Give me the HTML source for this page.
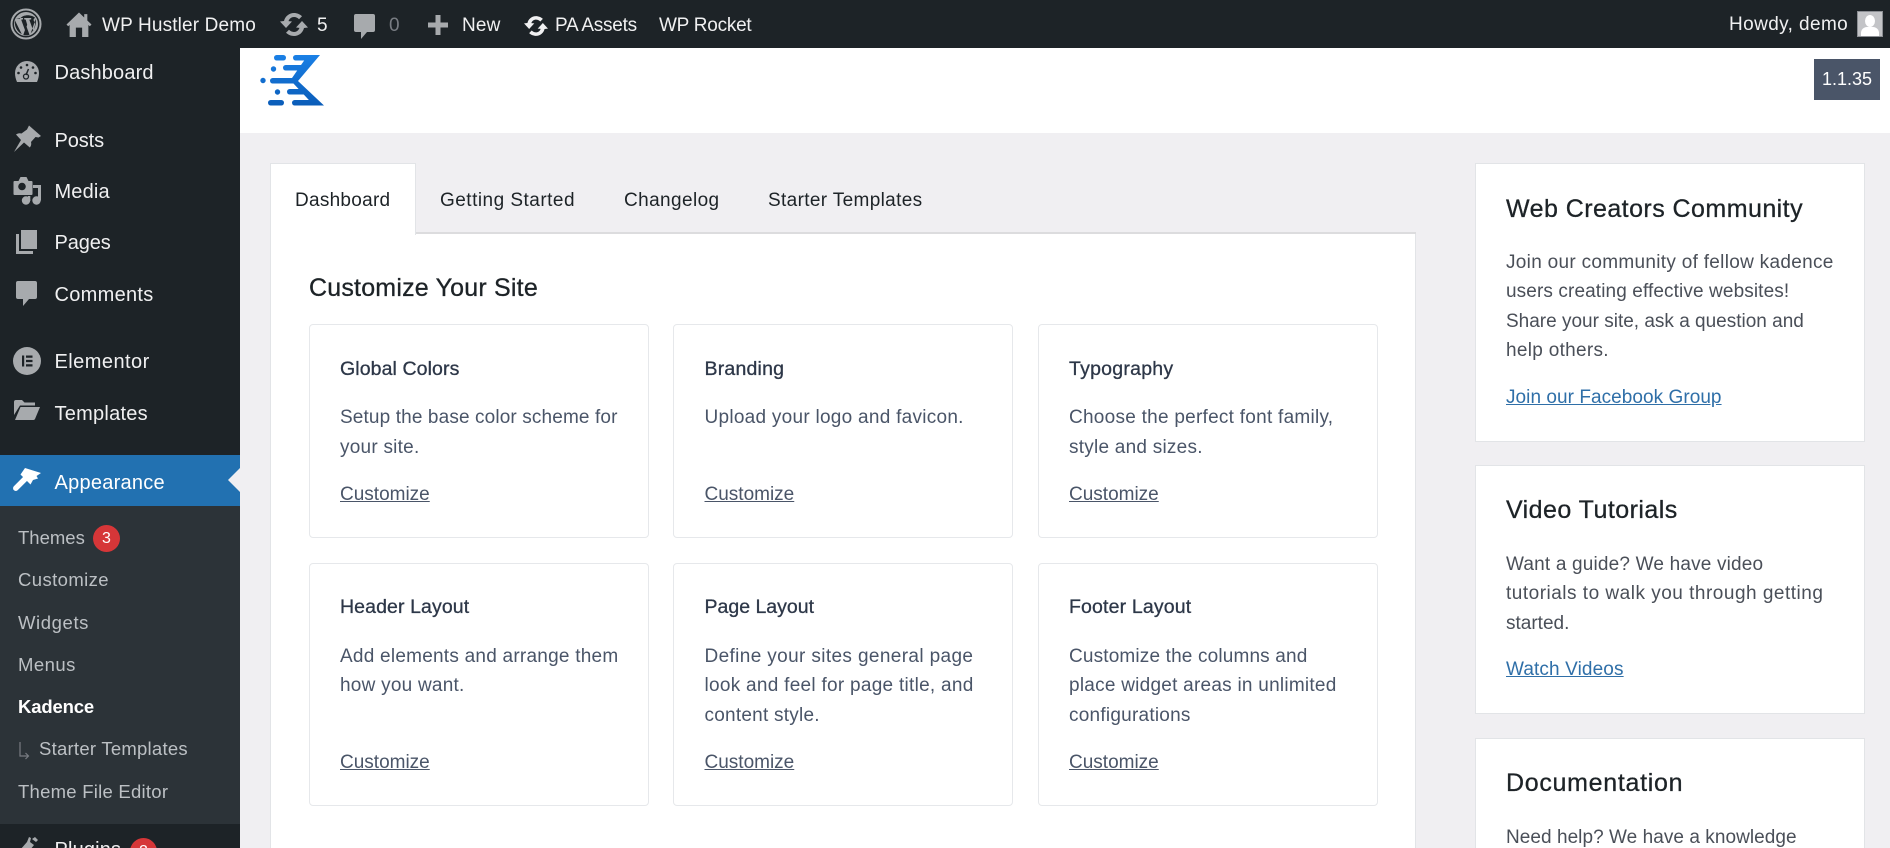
<!DOCTYPE html>
<html lang="en"><head><meta charset="utf-8"><title>Kadence Dashboard</title>
<style>
*{box-sizing:border-box}
html,body{margin:0;padding:0;width:1890px;height:848px;overflow:hidden;background:#f0eff2;font-family:"Liberation Sans",sans-serif}
#wrap{position:relative;width:1890px;height:848px;overflow:hidden;background:#f0eff2}
.a{position:absolute}
.t{position:absolute;white-space:nowrap;height:30px;line-height:30px}
svg{position:absolute;display:block}
#bar{left:0;top:0;width:1890px;height:48px;background:#1d2327}
#side{left:0;top:48px;width:240px;height:800px;background:#1d2327}
.bt{font-size:19px;color:#f0f0f1;letter-spacing:.15px}
.m{font-size:20px;color:#f0f0f1;letter-spacing:.15px}
.s{font-size:18.5px;color:#bcc0c4;letter-spacing:.25px}
.tab{font-size:19px;color:#1d2327;letter-spacing:.38px}
.box{position:absolute;background:#fff;border:1px solid #e6e8eb;border-radius:4px}
.ct{font-size:19.5px;color:#2d3748;-webkit-text-stroke:.3px #2d3748;letter-spacing:.1px}
.cd{font-size:19px;color:#4a5568;letter-spacing:.24px}
.cl{font-size:19px;color:#4a5568;text-decoration:underline;letter-spacing:0}
.rc{position:absolute;background:#fff;border:1px solid #e2e4e7;left:1475px;width:390px}
.rt{font-size:25px;color:#1d2327;-webkit-text-stroke:.3px #1d2327;letter-spacing:.45px}
.rd{font-size:19px;color:#4a4f58}
.rl{font-size:19px;color:#2f6fa8;text-decoration:underline;letter-spacing:.05px}
</style></head><body><div id="wrap">

<div class="a" id="bar"></div>
<div class="a" id="side"></div>

<!-- admin bar icons -->
<svg style="left:10px;top:8px" width="32" height="32" viewBox="0 0 32 32"><circle cx="16" cy="16" r="14.5" fill="none" stroke="#a7aaad" stroke-width="2"/><circle cx="16" cy="16" r="12" fill="#a7aaad"/><path d="M6 10h7v1.400l-1.800.3 4 11 2-6-1.500-5.100-1.500-.2V10h7v1.400l-1.900.3 4 11 1.500-5c.7-2.300-.2-3.700-1-5-.5-1 0-2.600 1.500-2.700-3-3-11-4.500-15.500.7zM5 12.500c-1 4.500 1.500 11 6.800 13.600zM16.300 18l-3 9c2 .6 4.200.5 6.200-.2zM25.700 11c.8 4-.5 10-5 14.400z" fill="#1d2327"/></svg>
<svg style="left:66px;top:12px" width="26" height="25" viewBox="0 0 24 24"><path d="M12 0.500 0 12l1.600 1.700L3 12.500V24h18V12.500l1.400 1.200L24 12l-4-3.800V2h-3v3.300zM9 15h6v9H9z" fill="#a7aaad" fill-rule="evenodd"/></svg>
<svg style="left:280px;top:12px" width="28" height="25" viewBox="0 0 28 25"><path d="M14 1C9 1 5 4.500 4 9L0 9.500 6 16l6-6.500-3.500-.4C9.500 6.500 11.500 5 14 5c2 0 3.700.8 5 2.200l3-3C20 2.300 17 1 14 1zM22 9l-6 6.500 3.500.4C18.500 18.500 16.500 20 14 20c-2 0-3.700-.8-5-2.200l-3 3C8 22.700 11 24 14 24c5 0 9-3.500 10-8l4-.5z" fill="#a7aaad"/></svg>
<svg style="left:354px;top:14px" width="21" height="25" viewBox="0 0 21 25"><path d="M2 0h17a2 2 0 0 1 2 2v14a2 2 0 0 1-2 2h-6l-6 7v-7H2a2 2 0 0 1-2-2V2a2 2 0 0 1 2-2z" fill="#a7aaad"/></svg>
<svg style="left:428px;top:15px" width="20" height="20" viewBox="0 0 20 20"><path d="M7.500 0h5v7.500H20v5h-7.500V20h-5v-7.500H0v-5h7.500z" fill="#a7aaad"/></svg>
<svg style="left:524px;top:14px" width="24" height="24" viewBox="0 0 28 25"><path d="M14 1C9 1 5 4.500 4 9L0 9.500 6 16l6-6.500-3.500-.4C9.500 6.500 11.500 5 14 5c2 0 3.700.8 5 2.200l3-3C20 2.300 17 1 14 1zM22 9l-6 6.500 3.500.4C18.500 18.500 16.500 20 14 20c-2 0-3.700-.8-5-2.200l-3 3C8 22.700 11 24 14 24c5 0 9-3.500 10-8l4-.5z" fill="#f0f0f1"/></svg>

<div class="t bt" style="left:102px;top:11px">WP Hustler Demo</div>
<div class="t bt" style="left:317px;top:11px">5</div>
<div class="t bt" style="left:389px;top:11px;color:#787c82">0</div>
<div class="t bt" style="left:462px;top:11px">New</div>
<div class="t bt" style="left:555px;top:11px;letter-spacing:-.25px">PA Assets</div>
<div class="t bt" style="left:659px;top:11px;letter-spacing:-.25px">WP Rocket</div>
<div class="t bt" style="left:1729px;top:10px;letter-spacing:.4px">Howdy, demo</div>
<div class="a" style="left:1857px;top:11px;width:26px;height:26px;background:#c3c4c7;border:1px solid #8c8f94;overflow:hidden"><div class="a" style="left:7px;top:3px;width:10px;height:12px;border-radius:50%;background:#fff"></div><div class="a" style="left:3px;top:15px;width:18px;height:12px;border-radius:6px 6px 0 0;background:#fff"></div></div>

<!-- sidebar -->
<div class="a" style="left:0;top:455px;width:240px;height:51px;background:#2271b1"></div>
<div class="a" style="left:0;top:506px;width:240px;height:318px;background:#2c3338"></div>
<svg style="left:228px;top:468px" width="12" height="24" viewBox="0 0 12 24"><path d="M12 0v24L0 12z" fill="#f0eff2"/></svg>

<svg style="left:15px;top:61px" width="24" height="21" viewBox="0 0 24 21"><path d="M12 0a12 12 0 0 0-12 12c0 3 .7 6 2 9h20c1.300-3 2-6 2-9A12 12 0 0 0 12 0z" fill="#a7aaad"/><path d="M13.500 8l-2.500 6" stroke="#1d2327" stroke-width="1.500"/><circle cx="11" cy="15.500" r="2.500" fill="none" stroke="#1d2327" stroke-width="1.300"/><circle cx="12" cy="4" r="1.300" fill="#1d2327"/><circle cx="6" cy="6.500" r="1.300" fill="#1d2327"/><circle cx="18" cy="6.500" r="1.300" fill="#1d2327"/><circle cx="3.500" cy="12" r="1.300" fill="#1d2327"/><circle cx="20.500" cy="12" r="1.300" fill="#1d2327"/></svg>
<svg style="left:0;top:120px" width="48" height="90" viewBox="0 120 48 90">
<path d="M29 125.500 41 136l-2.500 1.500-3-.5-4.500 5c.5 2 .2 4-1.200 5.500L24 142.500 14 152l7-12-5-5.500c1.600-1.200 3.500-1.600 5.500-1L27 129.500z" fill="#a7aaad"/>
<path d="M14.500 181h4l2-4h6l2 4h3a1 1 0 0 1 1 1v12a1 1 0 0 1-1 1h-17a1 1 0 0 1-1-1v-12a1 1 0 0 1 1-1z" fill="#a7aaad"/>
<circle cx="22" cy="186.500" r="3.800" fill="#1d2327"/>
<circle cx="26" cy="200.500" r="4.200" fill="#a7aaad"/><circle cx="36.500" cy="200.500" r="4.200" fill="#a7aaad"/>
<path d="M33 185h8v15.500h-3V188h-5zM28 196h2.300v5H28z" fill="#a7aaad"/></svg>
<svg style="left:16px;top:230px" width="21" height="24" viewBox="0 0 21 24"><path d="M5 0h16v19H5z" fill="#a7aaad"/><path d="M0 4h3v17h14v3H0z" fill="#a7aaad"/></svg>
<svg style="left:16px;top:281px" width="21" height="25" viewBox="0 0 21 25"><path d="M2 0h17a2 2 0 0 1 2 2v14a2 2 0 0 1-2 2h-6l-6 7v-7H2a2 2 0 0 1-2-2V2a2 2 0 0 1 2-2z" fill="#a7aaad"/></svg>
<svg style="left:13px;top:347px" width="28" height="28" viewBox="0 0 28 28"><circle cx="14" cy="14" r="14" fill="#a7aaad"/><path d="M9 8.500h2.200v11H9zM13 8.500h6.500v2.200H13zM13 12.900h6.500v2.200H13zM13 17.300h6.500v2.200H13z" fill="#1d2327"/></svg>
<svg style="left:14px;top:400px" width="26" height="20" viewBox="0 0 26 20"><path d="M0 2a2 2 0 0 1 2-2h6l2.500 2.500H21v3H6L0 15z" fill="#a7aaad"/><path d="M6.500 7H26l-5 12a2 2 0 0 1-1.500 1H1z" fill="#a7aaad"/></svg>
<svg style="left:8px;top:460px" width="40" height="40" viewBox="8 460 40 40"><path d="M25 468l16 5-4.500 3 1.500 2.500-5 1.500-2.500 4.500-10-10z" fill="#fff"/><path d="M15.800 488.200 25.500 478.500" stroke="#fff" stroke-width="5.500" stroke-linecap="round"/></svg>
<svg style="left:17px;top:837px" width="23" height="13" viewBox="0 0 23 13"><path d="M3 13 10 5l2-5 2 1-1 4 4 3-4 5zM15 2l3-2 3 3-2 2z" fill="#a7aaad"/></svg>

<div class="t m" style="left:54.500px;top:58px">Dashboard</div>
<div class="t m" style="left:54.500px;top:126px;letter-spacing:-.1px">Posts</div>
<div class="t m" style="left:54.500px;top:177px">Media</div>
<div class="t m" style="left:54.500px;top:228px;letter-spacing:-.1px">Pages</div>
<div class="t m" style="left:54.500px;top:280px;letter-spacing:.3px">Comments</div>
<div class="t m" style="left:54.500px;top:347px;letter-spacing:.45px">Elementor</div>
<div class="t m" style="left:54.500px;top:399px;letter-spacing:.25px">Templates</div>
<div class="t m" style="left:54.500px;top:468px;color:#fff;letter-spacing:.25px">Appearance</div>
<div class="t s" style="left:18px;top:523px;letter-spacing:0">Themes</div>
<div class="a" style="left:93px;top:525px;width:27px;height:27px;border-radius:50%;background:#d63638;color:#fff;font-size:16px;line-height:27px;text-align:center">3</div>
<div class="t s" style="left:18px;top:565px;letter-spacing:.4px">Customize</div>
<div class="t s" style="left:18px;top:608px;letter-spacing:.6px">Widgets</div>
<div class="t s" style="left:18px;top:650px;letter-spacing:.45px">Menus</div>
<div class="t s" style="left:18px;top:692px;color:#fff;font-weight:bold;letter-spacing:-.15px">Kadence</div>
<svg style="left:19px;top:742px" width="11" height="18" viewBox="0 0 11 18"><path d="M1 0v14h8M6.500 11l3 3-3 3" fill="none" stroke="#787c82" stroke-width="1.200"/></svg>
<div class="t s" style="left:39px;top:734px">Starter Templates</div>
<div class="t s" style="left:18px;top:777px">Theme File Editor</div>
<div class="t m" style="left:54.500px;top:835px">Plugins</div>
<div class="a" style="left:130px;top:838px;width:27px;height:27px;border-radius:50%;background:#d63638;color:#fff;font-size:16px;line-height:27px;text-align:center">2</div>

<!-- header -->
<div class="a" style="left:240px;top:48px;width:1650px;height:85px;background:#fff"></div>
<svg style="left:258px;top:52px" width="70" height="58" viewBox="258 52 70 58">
<defs><linearGradient id="g" gradientUnits="userSpaceOnUse" x1="300" y1="55" x2="300" y2="106"><stop offset="0" stop-color="#1a80e6"/><stop offset="1" stop-color="#0a5cb8"/></linearGradient></defs>
<g fill="url(#g)">
<polygon points="320,55 298,81 324,105.500 314,105.500 293,83 292,78 308,55"/>
<rect x="293" y="55" width="22" height="5.500" rx="2.700"/>
<rect x="283" y="65" width="23" height="5.500" rx="2.700"/>
<rect x="270" y="78" width="28" height="5.500" rx="2.700"/>
<rect x="287" y="89" width="20" height="5.500" rx="2.700"/>
<rect x="292" y="100" width="26" height="5.500" rx="2.700"/>
<rect x="274" y="55" width="12" height="5.500" rx="2.700"/>
<rect x="268" y="100" width="16" height="5.500" rx="2.700"/>
<circle cx="273.500" cy="69" r="2.700"/><circle cx="263" cy="80.500" r="2.700"/><circle cx="277.500" cy="92" r="2.700"/>
</g></svg>
<div class="a" style="left:1814px;top:59px;width:66px;height:41px;background:#4a5568;color:#fff;font-size:18px;line-height:41px;text-align:center">1.1.35</div>

<!-- main panel -->
<div class="a" style="left:270px;top:233px;width:1146px;height:615px;background:#fff;border:1px solid #e2e4e7;border-bottom:0"></div>
<div class="a" style="left:270px;top:232px;width:1146px;height:2px;background:#dcdcde"></div>
<div class="a" style="left:270px;top:163px;width:146px;height:72px;background:#fff;border:1px solid #e2e4e7;border-bottom:0"></div>
<div class="t tab" style="left:295px;top:186px;letter-spacing:.27px">Dashboard</div>
<div class="t tab" style="left:440px;top:186px;letter-spacing:.48px">Getting Started</div>
<div class="t tab" style="left:624px;top:186px;letter-spacing:.4px">Changelog</div>
<div class="t tab" style="left:768px;top:186px;letter-spacing:.35px">Starter Templates</div>
<div class="t" style="left:309px;top:272.500px;font-size:25px;color:#1d2327;-webkit-text-stroke:.3px #1d2327;letter-spacing:.2px">Customize Your Site</div>

<div class="box" style="left:309px;top:324px;width:340px;height:214px"></div>
<div class="box" style="left:673px;top:324px;width:340px;height:214px"></div>
<div class="box" style="left:1038px;top:324px;width:340px;height:214px"></div>
<div class="box" style="left:309px;top:563px;width:340px;height:243px"></div>
<div class="box" style="left:673px;top:563px;width:340px;height:243px"></div>
<div class="box" style="left:1038px;top:563px;width:340px;height:243px"></div>

<div class="t ct" style="left:340px;top:354px">Global Colors</div>
<div class="t cd" style="left:340px;top:403px;letter-spacing:.13px">Setup the base color scheme for</div>
<div class="t cd" style="left:340px;top:433px">your site.</div>
<div class="t cl" style="left:340px;top:480px">Customize</div>

<div class="t ct" style="left:704.500px;top:354px;letter-spacing:.2px">Branding</div>
<div class="t cd" style="left:704.500px;top:403px;letter-spacing:.27px">Upload your logo and favicon.</div>
<div class="t cl" style="left:704.500px;top:480px">Customize</div>

<div class="t ct" style="left:1069px;top:354px;letter-spacing:.25px">Typography</div>
<div class="t cd" style="left:1069px;top:403px;letter-spacing:.26px">Choose the perfect font family,</div>
<div class="t cd" style="left:1069px;top:433px">style and sizes.</div>
<div class="t cl" style="left:1069px;top:480px">Customize</div>

<div class="t ct" style="left:340px;top:592px">Header Layout</div>
<div class="t cd" style="left:340px;top:642px">Add elements and arrange them</div>
<div class="t cd" style="left:340px;top:671px">how you want.</div>
<div class="t cl" style="left:340px;top:748px">Customize</div>

<div class="t ct" style="left:704.500px;top:592px;letter-spacing:0">Page Layout</div>
<div class="t cd" style="left:704.500px;top:642px;letter-spacing:.37px">Define your sites general page</div>
<div class="t cd" style="left:704.500px;top:671px;letter-spacing:.28px">look and feel for page title, and</div>
<div class="t cd" style="left:704.500px;top:701px">content style.</div>
<div class="t cl" style="left:704.500px;top:748px">Customize</div>

<div class="t ct" style="left:1069px;top:592px;letter-spacing:.15px">Footer Layout</div>
<div class="t cd" style="left:1069px;top:642px;letter-spacing:.16px">Customize the columns and</div>
<div class="t cd" style="left:1069px;top:671px;letter-spacing:.25px">place widget areas in unlimited</div>
<div class="t cd" style="left:1069px;top:701px">configurations</div>
<div class="t cl" style="left:1069px;top:748px">Customize</div>

<!-- right cards -->
<div class="rc" style="top:163px;height:279px"></div>
<div class="rc" style="top:465px;height:249px"></div>
<div class="rc" style="top:738px;height:120px"></div>
<div class="t rt" style="left:1506px;top:194px">Web Creators Community</div>
<div class="t rd" style="left:1506px;top:248px;letter-spacing:.3px">Join our community of fellow kadence</div>
<div class="t rd" style="left:1506px;top:277px;letter-spacing:.11px">users creating effective websites!</div>
<div class="t rd" style="left:1506px;top:307px">Share your site, ask a question and</div>
<div class="t rd" style="left:1506px;top:336px;letter-spacing:.3px">help others.</div>
<div class="t rl" style="left:1506px;top:383px">Join our Facebook Group</div>
<div class="t rt" style="left:1506px;top:495px">Video Tutorials</div>
<div class="t rd" style="left:1506px;top:550px;letter-spacing:.18px">Want a guide? We have video</div>
<div class="t rd" style="left:1506px;top:579px;letter-spacing:.5px">tutorials to walk you through getting</div>
<div class="t rd" style="left:1506px;top:609px">started.</div>
<div class="t rl" style="left:1506px;top:655px;letter-spacing:.12px">Watch Videos</div>
<div class="t rt" style="left:1506px;top:768px;letter-spacing:.7px">Documentation</div>
<div class="t rd" style="left:1506px;top:823px;letter-spacing:.05px">Need help? We have a knowledge</div>
</div></body></html>
